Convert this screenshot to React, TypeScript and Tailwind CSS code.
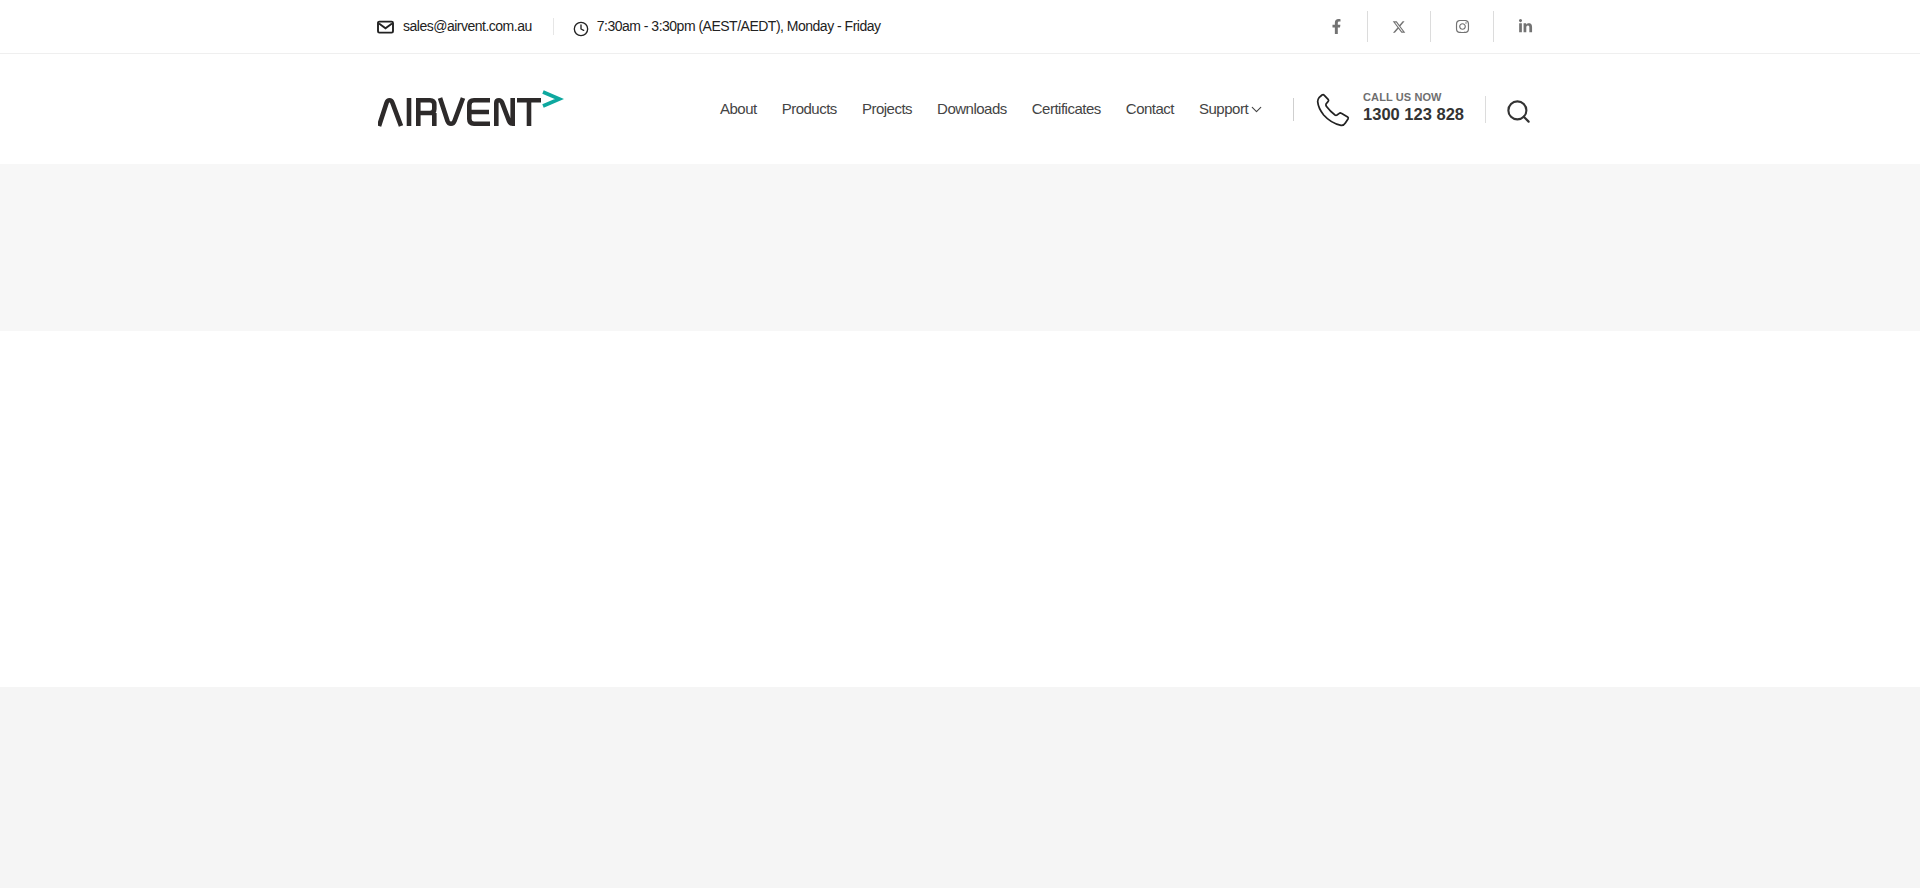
import { Clock, Search, ChevronDown } from "lucide-react";
import { FaFacebookF, FaLinkedinIn, FaInstagram } from "react-icons/fa";
import { FaXTwitter } from "react-icons/fa6";

const nav = ["About", "Products", "Projects", "Downloads", "Certificates", "Contact"];

function Logo() {
  return (
    <svg width="186" height="38" viewBox="2 0 186 38" fill="none" aria-label="AIRVENT" className="block">
      <g stroke="#2d2a2a" strokeWidth="4.6">
        <path d="M3 37 L10.5 14 Q11.5 11.3 13.5 11.3 Q15.5 11.3 16.5 14 L25 37" />
        <path d="M33 9 V37" />
        <path d="M42.3 37 V11.3 H54 Q58.3 11.3 58.3 15.5 V20 Q58.3 24 54 24 H42.3 M58.3 24 V37" />
        <path d="M64 9 L71.5 32 Q72.5 34.7 75 34.7 Q77.5 34.7 78.5 32 L87 9" />
        <path d="M114 11.3 H98 Q93.3 11.3 93.3 16 V30 Q93.3 34.7 98 34.7 H114 M93.3 23 H113" />
        <path d="M120.3 37 V14 Q120.3 11.3 123 11.3 Q125 11.3 126 13.5 L133 32 Q134 34.7 136.7 34.7 V9" />
        <path d="M141 11.3 H165 M153 11.3 V37" />
      </g>
      <path d="M167 3 L183.5 10 L167 17" stroke="#0ea89f" strokeWidth="3.6" />
    </svg>
  );
}

function MailIcon() {
  return (
    <svg width="17" height="14" viewBox="0 0 17 14" fill="none" stroke="#222" className="block">
      <rect x="1" y="1.6" width="15" height="11" rx="1.4" strokeWidth="1.9" />
      <path d="M2 3.4 L8.5 8.2 L15 3.4" strokeWidth="1.9" />
    </svg>
  );
}

function PhoneIcon() {
  return (
    <svg width="50" height="50" viewBox="0 0 150 150" fill="none" stroke="#222" strokeWidth="5.2" strokeLinejoin="round" className="block shrink-0">
      <path d="M24 38 L33 30 Q37 28 40 31 L52 44 Q54 47 51 50 L45 57 Q44 60 46 64 Q58 80 72 90 Q75 92 78 90 L85 85 Q88 83 91 85 L110 96 Q113 98 111 102 L103 114 Q98 122 90 121 Q60 115 38 90 Q22 70 20 50 Q20 43 24 38 Z" />
    </svg>
  );
}

export default function App() {
  return (
    <div className="min-h-[888px] flex flex-col bg-white font-['Liberation_Sans',Arial,sans-serif]">
      <div className="h-[54px] border-b border-[#efefef]">
        <div className="w-[1170px] h-full mx-auto flex items-center justify-between">
          <div className="flex items-center pl-[2px] text-[14px] tracking-[-0.5px] text-[#222]">
            <MailIcon />
            <span className="ml-[9px]">sales@airvent.com.au</span>
            <span className="ml-[21px] w-px h-[17px] bg-[#e6e6e6]" />
            <Clock size={16} strokeWidth={2} className="ml-[19px] mt-[4px] text-[#222]" />
            <span className="ml-[8px]">7:30am - 3:30pm (AEST/AEDT), Monday - Friday</span>
          </div>
          <div className="flex items-stretch h-[31px] -mr-[11px] text-[#737373]">
            <div className="w-[63px] flex items-center justify-center"><FaFacebookF size={15} className="ml-[1px]" /></div>
            <div className="w-[63px] flex items-center justify-center border-l border-[#dcdcdc]"><FaXTwitter size={14} /></div>
            <div className="w-[63px] flex items-center justify-center border-l border-[#dcdcdc]"><FaInstagram size={15} /></div>
            <div className="w-[63px] flex items-center justify-center border-l border-[#dcdcdc]"><FaLinkedinIn size={15} /></div>
          </div>
        </div>
      </div>
      <div className="h-[110px]">
        <div className="w-[1170px] h-full mx-auto flex items-center justify-between">
          <div className="ml-[3px] mt-[-3px]"><Logo /></div>
          <div className="flex items-center">
            <nav className="flex items-center gap-[25px] text-[15px] tracking-[-0.5px] text-[#444]">
              {nav.map((n) => (<a key={n}>{n}</a>))}
              <a className="flex items-center">Support<ChevronDown size={17} strokeWidth={1.6} className="mt-px" /></a>
            </nav>
            <span className="ml-[28px] w-px h-[23px] bg-[#cfcfcf]" />
            <span className="ml-[17px] mt-[1px]"><PhoneIcon /></span>
            <div className="ml-[2px] flex flex-col font-bold mt-[-5px]">
              <span className="text-[11px] tracking-[0.1px] leading-[14px] text-[#6f6f6f]">CALL US NOW</span>
              <span className="text-[16.5px] leading-[20px] text-[#333]">1300 123 828</span>
            </div>
            <span className="ml-[21px] w-px h-[27px] bg-[#dcdcdc]" />
            <Search size={27} strokeWidth={1.9} className="ml-[19px] mr-[13px] mt-[4px] text-[#333]" />
          </div>
        </div>
      </div>
      <div className="h-[167px] bg-[#f7f7f7]" />
      <div className="h-[356px] bg-white" />
      <div className="flex-1 bg-[#f5f5f5]" />
    </div>
  );
}
